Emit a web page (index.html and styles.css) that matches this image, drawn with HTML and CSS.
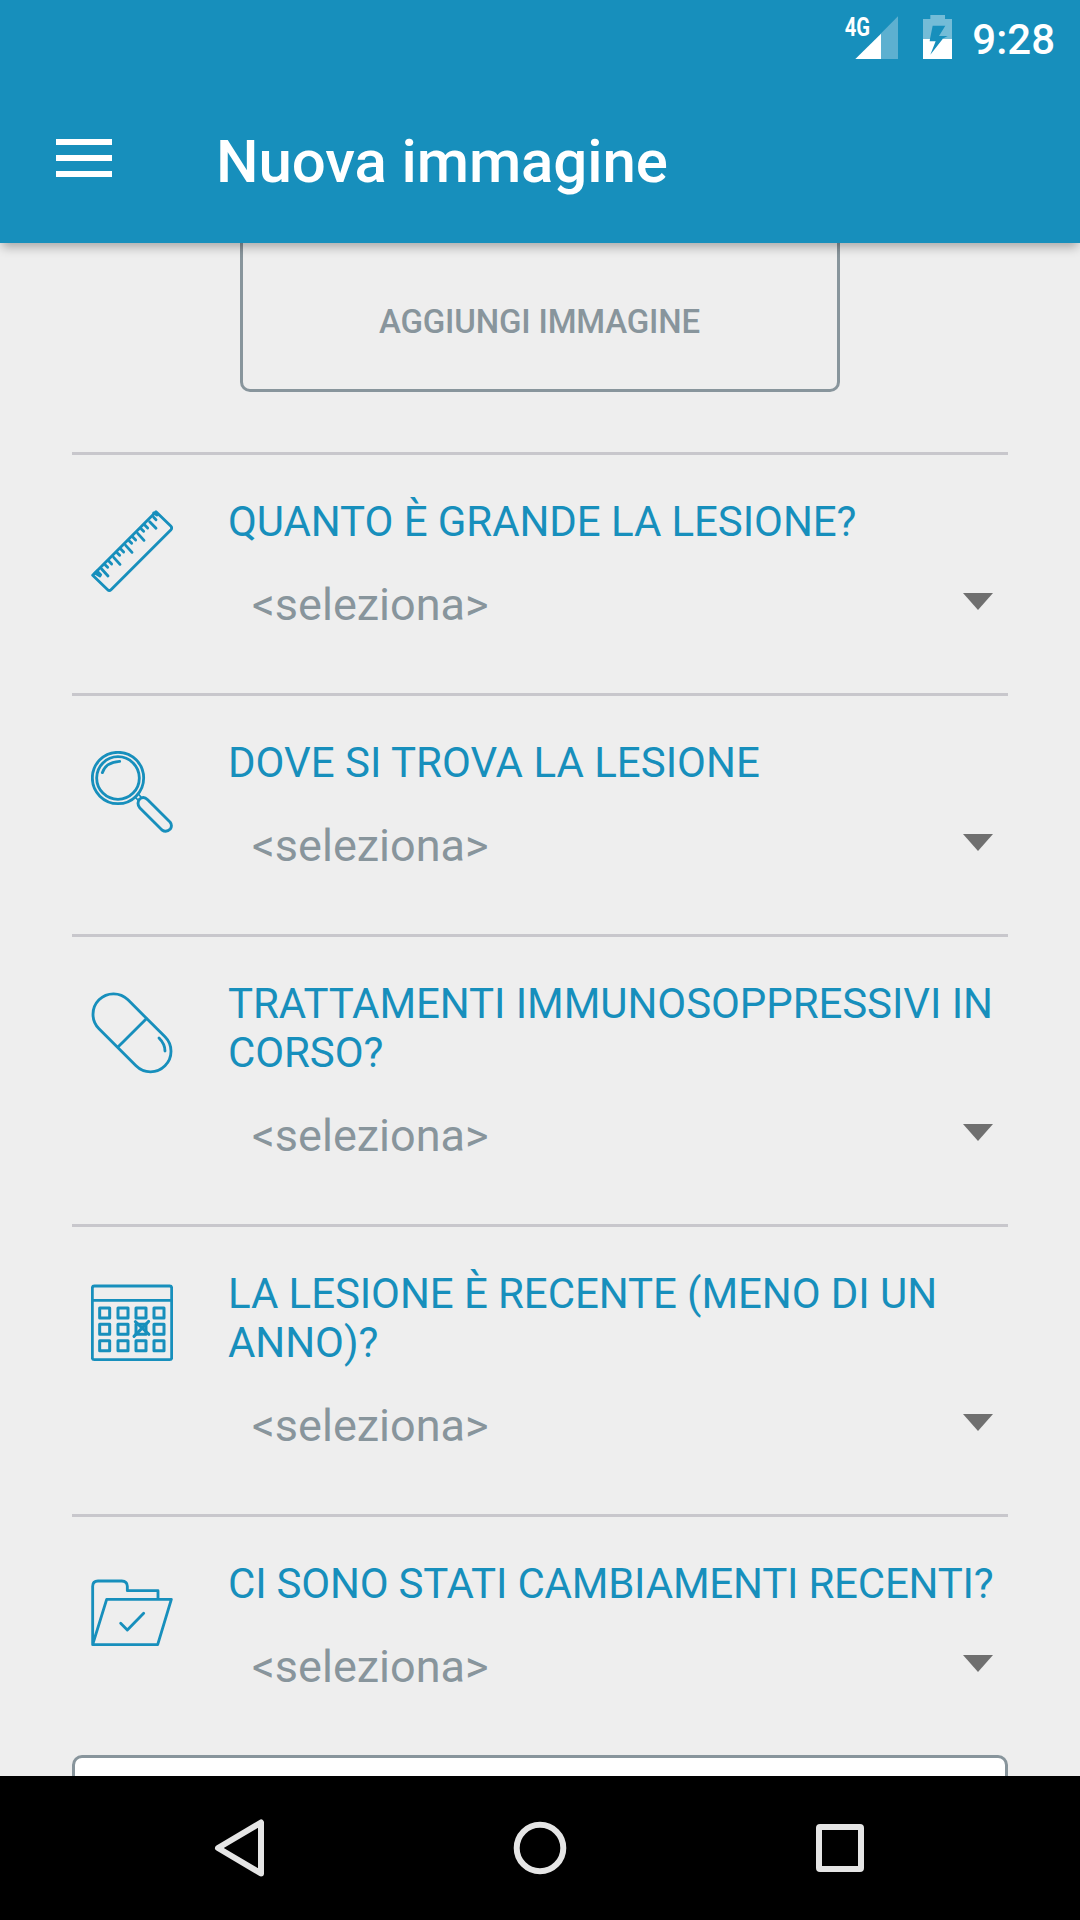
FILE: index.html
```html
<!DOCTYPE html>
<html lang="it">
<head>
<meta charset="utf-8">
<title>Nuova immagine</title>
<link rel="stylesheet" href="styles.css">
</head>
<body>
<div class="screen">
  <header class="header">
    <div class="status">
      <svg class="status-signal" viewBox="60 30 177 150">
        <text class="network" x="74" y="107" textLength="76" lengthAdjust="spacingAndGlyphs">4G</text>
        <path class="dim" d="M182 101L234 49V177H182z"/>
        <path class="solid" d="M106 177L183 101V177z"/>
      </svg>
      <svg class="status-battery" viewBox="309 45 87 132">
        <path class="dim-light" d="M331 45H375V57H396V117H366L383 108H357L376 77H338L330 117H309V57H331z"/>
        <path class="solid" d="M309 117H330L329 124H347L331 164L368 117H396V177H309z"/>
      </svg>
      <span class="clock">9:28</span>
    </div>
    <div class="appbar">
      <div class="menu"><i class="menu-line"></i><i class="menu-line"></i><i class="menu-line"></i></div>
      <h1 class="title">Nuova immagine</h1>
    </div>
  </header>

  <main class="content">
    <div class="add-image">AGGIUNGI IMMAGINE</div>
    <section class="question">
      <svg class="icon" viewBox="93 210 246 246">
        <path d="M98 406L288 215L333 259Q337 264 333 269L153 449Q148 454 143 449z"/>
        <path d="M105 399L120 408M111 393L122 404M125 387L144 408M136 375L143 382M147 364L155 372M161 352L180 373M172 339L179 346M183 328L191 336M197 316L216 337M208 303L215 310M219 292L227 300M233 280L252 301M244 267L251 274M255 256L263 264M269 245L288 265M281 232L288 239M281 219L291 225"/>
      </svg>
      <div class="field">
        <div class="label label-snug">QUANTO È GRANDE LA LESIONE?</div>
        <div class="select"><span>&lt;seleziona&gt;</span><i class="caret"></i></div>
      </div>
    </section>
    <section class="question">
      <svg class="icon" viewBox="93 93 246 246">
        <circle cx="174" cy="174" r="77"/>
        <circle cx="174" cy="174" r="64"/>
        <path d="M127 158Q138 126 179 124"/>
        <path class="thin" d="M224 231L234 221L243 231M225 231L235 241"/>
        <path d="M239 237Q251 227 263 239L330 306Q338 316 331 327Q319 339 306 330L239 263Q229 249 239 237z"/>
      </svg>
      <div class="field">
        <div class="label">DOVE SI TROVA LA LESIONE</div>
        <div class="select"><span>&lt;seleziona&gt;</span><i class="caret"></i></div>
      </div>
    </section>
    <section class="question">
      <svg class="icon" viewBox="93 96 246 246">
        <rect x="76" y="157" width="280" height="123" rx="61.5" transform="rotate(45 216 218.5)"/>
        <path d="M259 176L174 261M297 234Q315 252 315 273"/>
      </svg>
      <div class="field">
        <div class="label label-snug">TRATTAMENTI IMMUNOSOPPRESSIVI IN CORSO?</div>
        <div class="select"><span>&lt;seleziona&gt;</span><i class="caret"></i></div>
      </div>
    </section>
    <section class="question">
      <svg class="icon" viewBox="93 66 246 246">
        <rect x="97" y="78" width="238" height="221" rx="6"/>
        <path d="M97 121H335"/>
        <g class="days">
          <path d="M119 144h30v30h-30zM174 144h30v30h-30zM228 144h30v30h-30zM282 144h30v30h-30z"/>
          <path d="M119 193h30v30h-30zM174 193h30v30h-30zM228 193h30v30h-30zM282 193h30v30h-30z"/>
          <path d="M119 242h30v30h-30zM174 242h30v30h-30zM228 242h30v30h-30zM282 242h30v30h-30z"/>
          <path d="M226 185L267 223M266 184L222 229"/>
        </g>
      </svg>
      <div class="field">
        <div class="label label-snug">LA LESIONE È RECENTE (MENO DI UN ANNO)?</div>
        <div class="select"><span>&lt;seleziona&gt;</span><i class="caret"></i></div>
      </div>
    </section>
    <section class="question">
      <svg class="icon" viewBox="93 66 246 246">
        <path d="M98 284V109Q98 93 114 93H185Q202 94 202 109V122H294V147M98 284L140 148H334L293 284z"/>
        <path d="M182 220L202 240L251 190"/>
      </svg>
      <div class="field">
        <div class="label label-tight">CI SONO STATI CAMBIAMENTI RECENTI?</div>
        <div class="select"><span>&lt;seleziona&gt;</span><i class="caret"></i></div>
      </div>
    </section>
    <div class="notes"></div>
  </main>

  <nav class="navbar">
    <svg class="nav-icon" viewBox="0 0 60 60"><path d="M8 30L51 4.500V55.500z"/></svg>
    <svg class="nav-icon" viewBox="0 0 60 60"><circle cx="30" cy="30" r="23.300"/></svg>
    <svg class="nav-icon" viewBox="0 0 60 60"><rect x="9" y="9" width="42" height="42" rx="1"/></svg>
  </nav>
</div>
</body>
</html>
```
FILE: styles.css
```css
* {
  box-sizing: border-box;
}

body {
  margin: 0;
  font-family: Roboto, sans-serif;
}

.screen {
  display: flex;
  flex-direction: column;
  width: 1080px;
  height: 1920px;
  overflow: hidden;
  background: #eeeeee;
}

.header {
  position: relative;
  flex: none;
  height: 243px;
  background: #178fbc;
  color: #ffffff;
  box-shadow: 0 6px 10px -2px rgba(0, 0, 0, 0.3);
}

.status {
  display: flex;
  align-items: flex-start;
  height: 75px;
  padding: 10px 25px 0 0;
  justify-content: flex-end;
}

.status-signal {
  width: 59px;
  height: 50px;
  margin-right: 24px;
}

.status-battery {
  width: 29px;
  height: 44px;
  margin: 5px 20px 0 0;
}

.network {
  font-size: 76px;
  font-weight: 700;
  fill: #ffffff;
}

.solid {
  fill: #ffffff;
}

.dim {
  fill: #5db0d0;
}

.dim-light {
  fill: #74bcd7;
}

.clock {
  margin-top: 6px;
  font-size: 42px;
  font-weight: 500;
  line-height: 48px;
}

.appbar {
  display: flex;
  align-items: center;
  height: 168px;
  padding: 0 56px;
}

.menu {
  display: flex;
  flex-direction: column;
  gap: 10px;
  width: 160px;
  margin-bottom: 2px;
}

.menu-line {
  width: 56px;
  height: 6px;
  background: #ffffff;
}

.title {
  margin: 5px 0 0;
  font-size: 60px;
  font-weight: 500;
  line-height: 70px;
  letter-spacing: -0.1px;
}

.content {
  flex: 1;
  min-height: 0;
  overflow: hidden;
  padding: 0 72px;
}

.add-image {
  display: flex;
  align-items: flex-end;
  justify-content: center;
  width: 600px;
  height: 149px;
  margin: 0 auto 60px;
  padding: 0 1px 48px 0;
  border: 3px solid #88959c;
  border-top: 0;
  border-radius: 0 0 10px 10px;
  color: #88959c;
  font-size: 33px;
  font-weight: 500;
  line-height: 39px;
  letter-spacing: -0.17px;
}

.question {
  display: flex;
  border-top: 3px solid #c8c7cc;
  padding: 42px 0 62px 19px;
}

.icon {
  flex: none;
  width: 82px;
  height: 82px;
  margin: 13px 55px 0 0;
  fill: none;
  stroke: #178fbc;
  stroke-width: 8.5;
  stroke-linecap: round;
  stroke-linejoin: round;
}

.days {
  stroke-width: 9;
}

.thin {
  stroke-width: 5;
}

.field {
  flex: 1;
}

.label {
  margin-bottom: 32px;
  color: #178fbc;
  font-size: 42px;
  line-height: 49px;
}

.label-snug {
  letter-spacing: -0.08px;
}

.label-tight {
  letter-spacing: -0.21px;
}

.select {
  display: flex;
  align-items: center;
  justify-content: space-between;
  height: 53px;
  padding: 0 15px 0 24px;
  color: #88959c;
  font-size: 45px;
  line-height: 53px;
}

.caret {
  width: 30px;
  height: 17px;
  margin-bottom: 6px;
  background: #6f6f6f;
  clip-path: polygon(0 0, 100% 0, 50% 100%);
}

.notes {
  height: 200px;
  border: 3px solid #88959c;
  border-radius: 10px;
  background: #ffffff;
}

.navbar {
  flex: none;
  display: flex;
  justify-content: center;
  align-items: center;
  gap: 240px;
  height: 144px;
  background: #000000;
}

.nav-icon {
  width: 60px;
  height: 60px;
  fill: none;
  stroke: #e5e5e5;
  stroke-width: 6;
  stroke-linejoin: round;
}
```
